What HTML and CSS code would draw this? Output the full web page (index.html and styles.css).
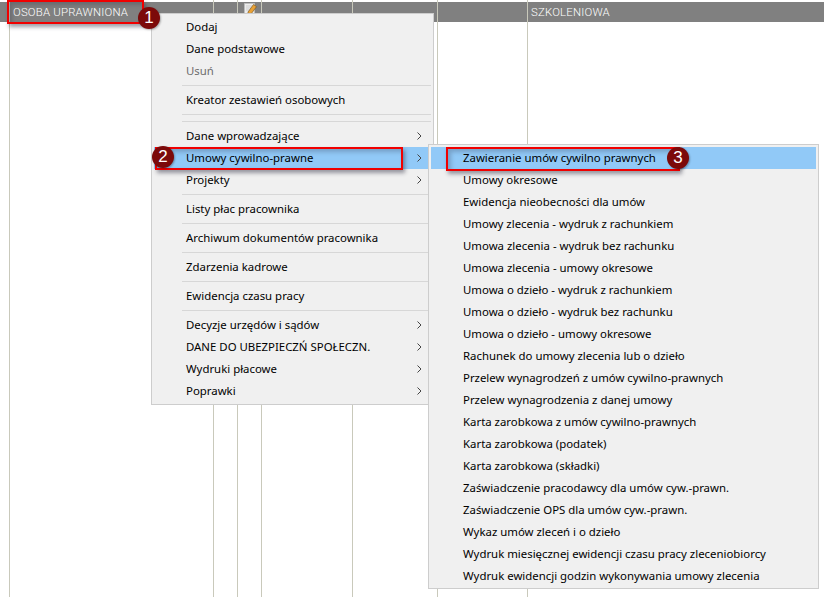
FILE: index.html
```html
<!DOCTYPE html>
<html lang="pl">
<head>
<meta charset="utf-8">
<title>Menu</title>
<link rel="stylesheet" href="styles.css">
</head>
<body>
<div class="cols">
  <div class="col w-lead"><div class="head"></div></div>
  <div class="col w-a"><div class="head"><span class="head-text">OSOBA UPRAWNIONA</span></div></div>
  <div class="col w-b"><div class="head"></div></div>
  <div class="col w-b"><div class="head head-icon">
    <svg width="16" height="14" viewBox="0 0 16 14"><path d="M1.500 1.500h10v11h-10z" fill="#ececec" stroke="#bdbdbd"/><path d="M3 4h6M3 6h5M3 8h3" stroke="#cfcfcf"/><path d="M5 10l5.500-7.500 3 2.200-5.500 7.300-3 .8z" fill="#e9a136" stroke="#7d5a24" stroke-width=".7"/></svg>
  </div></div>
  <div class="col w-c"><div class="head"></div></div>
  <div class="col w-d"><div class="head"></div></div>
  <div class="col w-e"><div class="head"></div></div>
  <div class="col w-f"><div class="head"><span class="head-text">SZKOLENIOWA</span></div></div>
</div>

<div class="menu menu-main">
  <div class="item">Dodaj</div>
  <div class="item">Dane podstawowe</div>
  <div class="item off">Usuń</div>
  <div class="sep"></div>
  <div class="item">Kreator zestawień osobowych</div>
  <div class="sep"></div>
  <div class="sep"></div>
  <div class="item more">Dane wprowadzające<svg class="chev" width="5" height="8" viewBox="0 0 5 8"><path d="M.5.500l3.500 3.500-3.500 3.500" fill="none" stroke="#444"/></svg></div>
  <div class="item hot more">Umowy cywilno-prawne<svg class="chev" width="5" height="8" viewBox="0 0 5 8"><path d="M.5.500l3.500 3.500-3.500 3.500" fill="none" stroke="#444"/></svg></div>
  <div class="item more">Projekty<svg class="chev" width="5" height="8" viewBox="0 0 5 8"><path d="M.5.500l3.500 3.500-3.500 3.500" fill="none" stroke="#444"/></svg></div>
  <div class="sep"></div>
  <div class="item">Listy płac pracownika</div>
  <div class="sep"></div>
  <div class="item">Archiwum dokumentów pracownika</div>
  <div class="sep"></div>
  <div class="item">Zdarzenia kadrowe</div>
  <div class="sep"></div>
  <div class="item">Ewidencja czasu pracy</div>
  <div class="sep"></div>
  <div class="item more">Decyzje urzędów i sądów<svg class="chev" width="5" height="8" viewBox="0 0 5 8"><path d="M.5.500l3.500 3.500-3.500 3.500" fill="none" stroke="#444"/></svg></div>
  <div class="item more">DANE DO UBEZPIECZŃ SPOŁECZN.<svg class="chev" width="5" height="8" viewBox="0 0 5 8"><path d="M.5.500l3.500 3.500-3.500 3.500" fill="none" stroke="#444"/></svg></div>
  <div class="item more">Wydruki płacowe<svg class="chev" width="5" height="8" viewBox="0 0 5 8"><path d="M.5.500l3.500 3.500-3.500 3.500" fill="none" stroke="#444"/></svg></div>
  <div class="item more">Poprawki<svg class="chev" width="5" height="8" viewBox="0 0 5 8"><path d="M.5.500l3.500 3.500-3.500 3.500" fill="none" stroke="#444"/></svg></div>
</div>

<div class="menu menu-sub">
  <div class="item hot">Zawieranie umów cywilno prawnych</div>
  <div class="item">Umowy okresowe</div>
  <div class="item">Ewidencja nieobecności dla umów</div>
  <div class="item">Umowy zlecenia - wydruk z rachunkiem</div>
  <div class="item">Umowa zlecenia - wydruk bez rachunku</div>
  <div class="item">Umowa zlecenia - umowy okresowe</div>
  <div class="item">Umowa o dzieło - wydruk z rachunkiem</div>
  <div class="item">Umowa o dzieło - wydruk bez rachunku</div>
  <div class="item">Umowa o dzieło - umowy okresowe</div>
  <div class="item">Rachunek do umowy zlecenia lub o dzieło</div>
  <div class="item">Przelew wynagrodzeń z umów cywilno-prawnych</div>
  <div class="item">Przelew wynagrodzenia z danej umowy</div>
  <div class="item">Karta zarobkowa z umów cywilno-prawnych</div>
  <div class="item">Karta zarobkowa (podatek)</div>
  <div class="item">Karta zarobkowa (składki)</div>
  <div class="item">Zaświadczenie pracodawcy dla umów cyw.-prawn.</div>
  <div class="item">Zaświadczenie OPS dla umów cyw.-prawn.</div>
  <div class="item">Wykaz umów zleceń i o dzieło</div>
  <div class="item">Wydruk miesięcznej ewidencji czasu pracy zleceniobiorcy</div>
  <div class="item">Wydruk ewidencji godzin wykonywania umowy zlecenia</div>
</div>

<div class="frame frame-1"></div>
<div class="frame frame-2"></div>
<div class="frame frame-3"></div>
<div class="badge badge-1">1</div>
<div class="badge badge-2">2</div>
<div class="badge badge-3">3</div>
</body>
</html>
```
FILE: styles.css
```css
html, body {
  margin: 0;
  padding: 0;
  width: 824px;
  height: 597px;
  overflow: hidden;
  background: #fff;
  font-family: "Noto Sans", "Open Sans", sans-serif;
}

.cols {
  display: flex;
  height: 597px;
}

.col {
  box-sizing: border-box;
  height: 100%;
  padding-top: 2px;
  border-left: 1px solid #c9c9bb;
  flex: none;
}

.w-lead { width: 9px; border-left: 0; }
.w-a { width: 204px; }
.w-b { width: 24px; }
.w-c { width: 91px; }
.w-d { width: 85px; }
.w-e { width: 90px; }
.w-f { flex: 1; }

.head {
  height: 20px;
  background: #808080;
  display: flex;
  align-items: center;
  padding-left: 3px;
  color: #fff;
  font-family: Roboto, "Liberation Sans", sans-serif;
  font-weight: 300;
  font-size: 11.4px;
  letter-spacing: .2px;
  white-space: nowrap;
  overflow: hidden;
}

.head-icon {
  padding-left: 5px;
  align-items: flex-start;
}

.menu {
  position: absolute;
  box-sizing: border-box;
  display: flex;
  flex-direction: column;
  background: #f0f0f0;
  border: 1px solid #cdcdcd;
  font-size: 11.4px;
  color: #000;
}

.menu-main {
  left: 151px;
  top: 13px;
  width: 283px;
  height: 392px;
  padding: 2px;
}

.menu-sub {
  left: 428px;
  top: 144px;
  width: 391px;
  height: 445px;
  padding: 2px 2px 1px;
}

.item {
  flex: none;
  height: 22px;
  line-height: 22px;
  white-space: nowrap;
  display: flex;
  align-items: center;
  justify-content: space-between;
}

.menu-main .item { padding: 0 9px 0 32px; }
.menu-sub .item { padding-left: 32px; }

.off { color: #6d6d6d; }
.hot { background: #91c9f7; }

.sep {
  flex: none;
  height: 1px;
  margin: 3px 0 3px 28px;
  background: #d7d7d7;
}

.chev { flex: none; }

.frame {
  position: absolute;
  box-sizing: border-box;
  border: 2px solid #f00000;
  box-shadow: 2px 3px 4px rgba(40, 40, 60, .45), inset 3px 3px 4px rgba(40, 40, 60, .25);
}

.frame-1 { left: 7px; top: 0; width: 137px; height: 24px; }
.frame-2 { left: 155px; top: 147px; width: 248px; height: 23px; }
.frame-3 { left: 446px; top: 147px; width: 234px; height: 24px; }

.badge {
  position: absolute;
  width: 22px;
  height: 22px;
  border-radius: 50%;
  background: #7c0a0a;
  color: #fff;
  font-family: "Liberation Sans", sans-serif;
  font-size: 17px;
  line-height: 22px;
  text-align: center;
  box-shadow: 1px 1px 2px rgba(0, 0, 0, .3);
}

.badge-1 { left: 138px; top: 7px; }
.badge-2 { left: 152px; top: 146px; }
.badge-3 { left: 667px; top: 147px; }
```
